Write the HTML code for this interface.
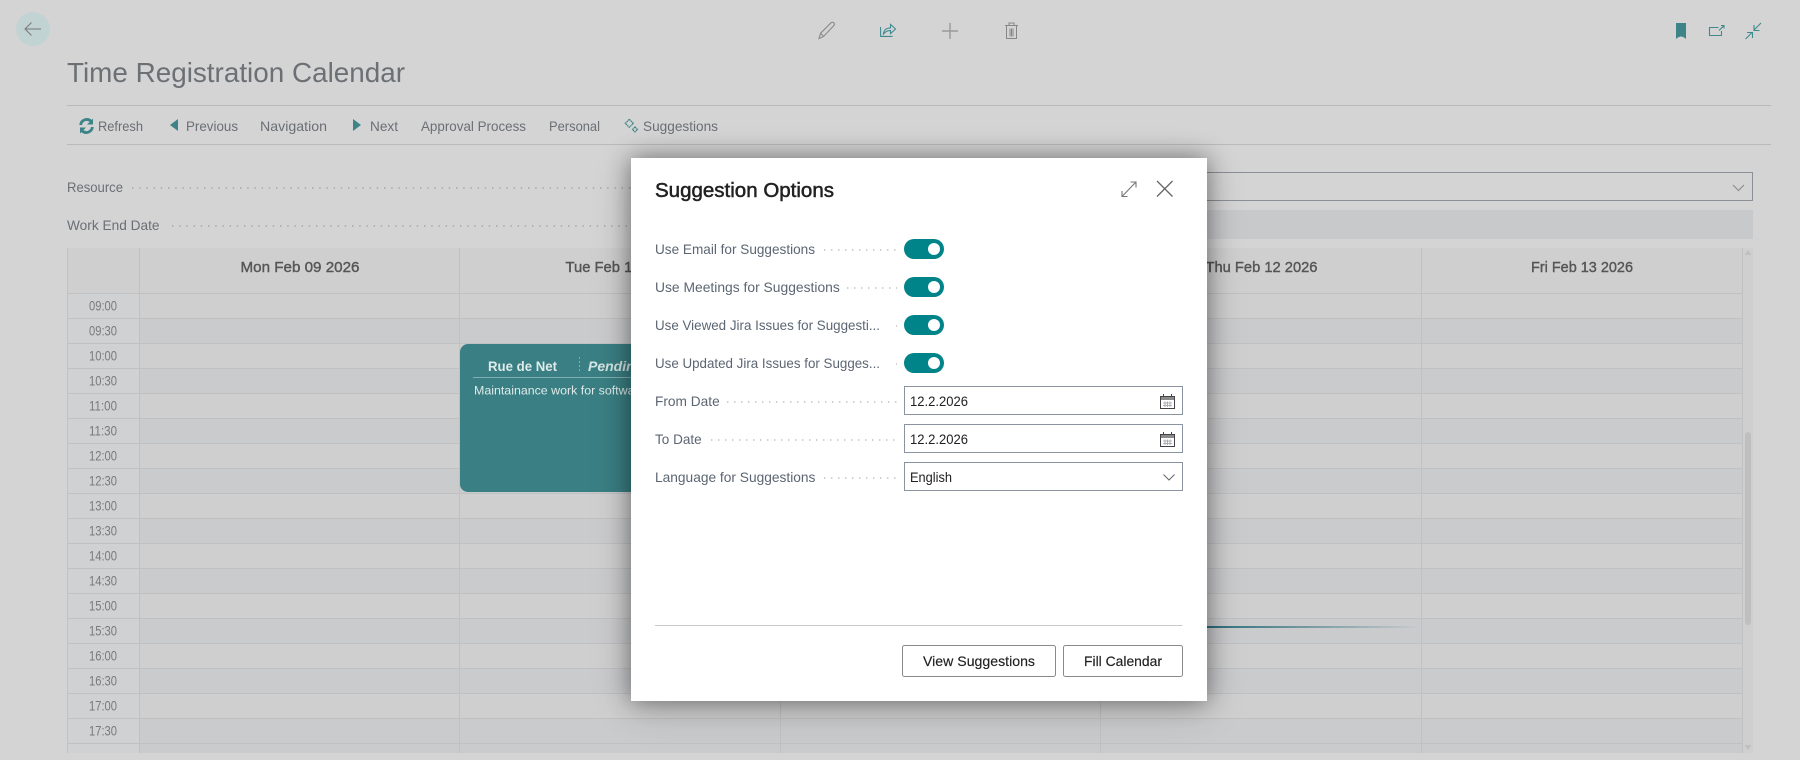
<!DOCTYPE html>
<html lang="en"><head><meta charset="utf-8"><title>Time Registration Calendar</title>
<style>
html,body{margin:0;padding:0;width:1800px;height:760px;overflow:hidden;background:#d4d4d4}
svg{position:absolute;left:0;top:0;display:block}
text{font-family:"Liberation Sans",sans-serif;font-size:14px;white-space:pre}
.tb text,.tb{fill:#6b6f75}
.lab{fill:#5c6673}
.hd{fill:#565656;stroke:#565656;stroke-width:.4;font-size:15px}
.tm{fill:#7a7a7a;font-size:12px;text-anchor:start}
.gr{stroke:#c0c1c3;stroke-width:1;fill:none}
#modal{position:absolute;left:631px;top:158px;width:576px;height:543px;background:#fff;box-shadow:0 0 22px rgba(0,0,0,.42),0 8px 40px rgba(0,0,0,.16)}
</style></head><body>
<svg width="1800" height="760" viewBox="0 0 1800 760" xmlns="http://www.w3.org/2000/svg">
<!-- back -->
<ellipse cx="33" cy="29" rx="17" ry="17" fill="#c2d3d4"/>
<path d="M41 29H25.5M31.5 22.5L25 29l6.5 6.5" fill="none" stroke="#777" stroke-width="1"/>
<!-- top icons -->
<path d="M819 38.5l1.6-5.3L831 22.8c.8-.8 2-.8 2.8 0s.8 2 0 2.8L823.4 36.6zM820.6 33.2l3 3.2" fill="none" stroke="#8a8a8a" stroke-width="1.1"/>
<path d="M880.6 27v9.4h12" fill="none" stroke="#3f8a90" stroke-width="1.1"/>
<path d="M883.5 34c.3-3.9 2.6-6 7-6v-3.6l5 4.6-5 4.6v-3.1c-2.8 0-5 .9-7 3.5z" fill="none" stroke="#3f8a90" stroke-width="1.1"/>
<path d="M942 31h16M950 23v16" stroke="#9a9a9a" stroke-width="1.4" fill="none"/>
<path d="M1005 25.5h13M1009 25v-2h5v2M1006.5 26v12.5h10V26M1010 28.5v8M1011.5 28.5v8M1013 28.5v8" fill="none" stroke="#868686" stroke-width="1"/>
<path d="M1676 23h10v16l-2-1.6-3-1-3 1-2 1.6z" fill="#3c8488"/>
<path d="M1721.5 31v4.5h-12v-8h9M1719 30.5l4.7-4.7M1721 25.5h3v3" fill="none" stroke="#3f8a8e" stroke-width="1.1"/>
<path d="M1761 23l-7 7M1754 25v5.5h5.5M1745.5 39l6.5-6.5M1747 32.5h5.5V38" fill="none" stroke="#3f8a8e" stroke-width="1.1"/>
<!-- title -->
<text x="67" y="82" style="font-size:28px" fill="#6c7075" textLength="338" lengthAdjust="spacingAndGlyphs">Time Registration Calendar</text>
<!-- toolbar -->
<rect x="67" y="105" width="1704" height="1" fill="#bababa"/>
<rect x="67" y="144" width="1704" height="1" fill="#bababa"/>
<g class="tb">
<text x="98" y="131" textLength="45" lengthAdjust="spacingAndGlyphs">Refresh</text>
<text x="186" y="131" textLength="52" lengthAdjust="spacingAndGlyphs">Previous</text>
<text x="260" y="131" textLength="67" lengthAdjust="spacingAndGlyphs">Navigation</text>
<text x="370" y="131" textLength="28" lengthAdjust="spacingAndGlyphs">Next</text>
<text x="421" y="131" textLength="105" lengthAdjust="spacingAndGlyphs">Approval Process</text>
<text x="549" y="131" textLength="51" lengthAdjust="spacingAndGlyphs">Personal</text>
<text x="643" y="131" textLength="75" lengthAdjust="spacingAndGlyphs">Suggestions</text>
</g>
<path d="M80.6 125a6.2 6.2 0 0 1 10.6-3.6M92.4 127a6.2 6.2 0 0 1-10.6 3.6" fill="none" stroke="#3c8488" stroke-width="2.8"/>
<path d="M93 118.5v6h-6zM80 133.5v-6h6z" fill="#3c8488"/>
<path d="M178 119v12l-8-6zM353 119v12l8-6z" fill="#3c8488"/>
<path d="M629.3 119.3l4 4-4 4-4-4zM635 127l2.5 2.5-2.5 2.5-2.5-2.5z" fill="none" stroke="#3c8488" stroke-width="1.2" stroke-dasharray="1.6 .5"/>
<!-- fields -->
<text x="67" y="192" class="tb" fill="#6f747a" textLength="56" lengthAdjust="spacingAndGlyphs">Resource</text>
<text x="67" y="230" class="tb" fill="#6f747a" textLength="92.5" lengthAdjust="spacingAndGlyphs">Work End Date</text>
<path d="M132 188H640M172 226H640" stroke="#9c9c9c" stroke-width="1.2" stroke-dasharray="1.4 5.8" fill="none"/>
<rect x="900.5" y="172.5" width="852" height="28" fill="none" stroke="#8b9097"/>
<rect x="900" y="210" width="853" height="29" fill="#c8c9cb"/>
<path d="M1733 185l5.5 5.5 5.5-5.5" fill="none" stroke="#888"/>
<!-- calendar -->
<rect x="67" y="248" width="1675" height="45" fill="#cfcfcf"/>
<rect x="139" y="293" width="1603" height="460" fill="#cfcfcf"/>
<rect x="67" y="293" width="72" height="460" fill="#d0d1d2"/>
<g fill="#cacbcd">
<rect x="140" y="318" width="1602" height="25"/><rect x="140" y="368" width="1602" height="25"/>
<rect x="140" y="418" width="1602" height="25"/><rect x="140" y="468" width="1602" height="25"/>
<rect x="140" y="518" width="1602" height="25"/><rect x="140" y="568" width="1602" height="25"/>
<rect x="140" y="618" width="1602" height="25"/><rect x="140" y="668" width="1602" height="25"/>
<rect x="140" y="718" width="1602" height="25"/><rect x="140" y="743" width="1602" height="10"/>
</g>
<path class="gr" d="M67 293.5H1742M67 318.5H1742M67 343.5H1742M67 368.5H1742M67 393.5H1742M67 418.5H1742M67 443.5H1742M67 468.5H1742M67 493.5H1742M67 518.5H1742M67 543.5H1742M67 568.5H1742M67 593.5H1742M67 618.5H1742M67 643.5H1742M67 668.5H1742M67 693.5H1742M67 718.5H1742M67 743.5H1742"/>
<path class="gr" d="M67.5 248V753M139.5 248V753M459.5 248V753M780.5 248V753M1100.5 248V753M1421.5 248V753M1742.5 248V753"/>
<text class="hd" x="240.5" y="272" textLength="119" lengthAdjust="spacingAndGlyphs">Mon Feb 09 2026</text>
<text class="hd" x="565.5" y="272" textLength="112" lengthAdjust="spacingAndGlyphs">Tue Feb 10 2026</text>
<text class="hd" x="1205.5" y="272" textLength="112" lengthAdjust="spacingAndGlyphs">Thu Feb 12 2026</text>
<text class="hd" x="1531" y="272" textLength="102" lengthAdjust="spacingAndGlyphs">Fri Feb 13 2026</text>
<g class="tm" transform="translate(0 .6)">
<text x="89" y="310" textLength="28" lengthAdjust="spacingAndGlyphs">09:00</text>
<text x="89" y="335" textLength="28" lengthAdjust="spacingAndGlyphs">09:30</text>
<text x="89" y="360" textLength="28" lengthAdjust="spacingAndGlyphs">10:00</text>
<text x="89" y="385" textLength="28" lengthAdjust="spacingAndGlyphs">10:30</text>
<text x="89" y="410" textLength="28" lengthAdjust="spacingAndGlyphs">11:00</text>
<text x="89" y="435" textLength="28" lengthAdjust="spacingAndGlyphs">11:30</text>
<text x="89" y="460" textLength="28" lengthAdjust="spacingAndGlyphs">12:00</text>
<text x="89" y="485" textLength="28" lengthAdjust="spacingAndGlyphs">12:30</text>
<text x="89" y="510" textLength="28" lengthAdjust="spacingAndGlyphs">13:00</text>
<text x="89" y="535" textLength="28" lengthAdjust="spacingAndGlyphs">13:30</text>
<text x="89" y="560" textLength="28" lengthAdjust="spacingAndGlyphs">14:00</text>
<text x="89" y="585" textLength="28" lengthAdjust="spacingAndGlyphs">14:30</text>
<text x="89" y="610" textLength="28" lengthAdjust="spacingAndGlyphs">15:00</text>
<text x="89" y="635" textLength="28" lengthAdjust="spacingAndGlyphs">15:30</text>
<text x="89" y="660" textLength="28" lengthAdjust="spacingAndGlyphs">16:00</text>
<text x="89" y="685" textLength="28" lengthAdjust="spacingAndGlyphs">16:30</text>
<text x="89" y="710" textLength="28" lengthAdjust="spacingAndGlyphs">17:00</text>
<text x="89" y="735" textLength="28" lengthAdjust="spacingAndGlyphs">17:30</text>
</g>
<!-- event -->
<rect x="460" y="344" width="300" height="148" rx="8" fill="#3a7f83"/>
<text x="488" y="371" fill="#dfeaea" style="font-weight:700" textLength="69" lengthAdjust="spacingAndGlyphs">Rue de Net</text>
<path d="M579.5 357V373" stroke="#8fbcbe" stroke-width=".8" stroke-dasharray="2 2"/>
<text x="588" y="371" fill="#d5e4e4" style="font-weight:700;font-style:italic">Pending</text>
<rect x="473" y="377" width="280" height="1" fill="#7fb1b3"/>
<text x="474" y="394.5" fill="#dfeaea" style="font-size:12.4px">Maintainance work for software</text>
<!-- time line -->
<defs><linearGradient id="tl" x1="0" x2="1" y1="0" y2="0"><stop offset="0" stop-color="#1f6a78"/><stop offset=".35" stop-color="#2f6f7c"/><stop offset="1" stop-color="#2f6f7c" stop-opacity="0"/></linearGradient></defs>
<rect x="1100" y="626" width="320" height="2" fill="url(#tl)"/>
<!-- scrollbar -->
<rect x="1743" y="248" width="10" height="505" fill="#cfcfd0"/>
<rect x="1745" y="432" width="6" height="193" rx="3" fill="#bfbfbf"/>
<path d="M1748 250l3.5 5h-7zM1748 750l3.5-5h-7z" fill="#bfbfc0"/>
</svg>
<div id="modal"></div>
<svg width="1800" height="760" viewBox="0 0 1800 760" xmlns="http://www.w3.org/2000/svg">
<text x="655" y="197" fill="#212121" stroke="#212121" stroke-width=".5" style="font-size:20px" textLength="179" lengthAdjust="spacingAndGlyphs">Suggestion Options</text>
<path d="M1122 196.5L1136 182M1130.5 182h5.5v5.5M1122 191v5.5h5.5" fill="none" stroke="#777" stroke-width="1.1"/>
<path d="M1157 181L1172.5 196.5M1172.5 181L1157 196.5" fill="none" stroke="#666" stroke-width="1.3"/>
<g class="lab">
<text x="655" y="254" textLength="160" lengthAdjust="spacingAndGlyphs">Use Email for Suggestions</text>
<text x="655" y="292" textLength="184.8" lengthAdjust="spacingAndGlyphs">Use Meetings for Suggestions</text>
<text x="655" y="330" textLength="225" lengthAdjust="spacingAndGlyphs">Use Viewed Jira Issues for Suggesti...</text>
<text x="655" y="368" textLength="225" lengthAdjust="spacingAndGlyphs">Use Updated Jira Issues for Sugges...</text>
<text x="655" y="406" textLength="64.7" lengthAdjust="spacingAndGlyphs">From Date</text>
<text x="655" y="444" textLength="46.7" lengthAdjust="spacingAndGlyphs">To Date</text>
<text x="655" y="482" textLength="160.4" lengthAdjust="spacingAndGlyphs">Language for Suggestions</text>
</g>
<path d="M824 250H897M847 288H897M896 326H897M896 364H897M727 402H897M711 440H897M824 478H897" stroke="#b4b4b4" stroke-width="1.2" stroke-dasharray="1.4 5.6" fill="none"/>
<g fill="#008489">
<rect x="904" y="239" width="40" height="20" rx="10"/><rect x="904" y="277" width="40" height="20" rx="10"/>
<rect x="904" y="315" width="40" height="20" rx="10"/><rect x="904" y="353" width="40" height="20" rx="10"/>
</g>
<g fill="#fff"><circle cx="934" cy="249" r="6"/><circle cx="934" cy="287" r="6"/><circle cx="934" cy="325" r="6"/><circle cx="934" cy="363" r="6"/></g>
<g fill="#fff" stroke="#8a93a0"><rect x="904.5" y="386.5" width="278" height="28"/><rect x="904.5" y="424.5" width="278" height="28"/><rect x="904.5" y="462.5" width="278" height="28"/></g>
<g fill="#212121">
<text x="910" y="406" textLength="58" lengthAdjust="spacingAndGlyphs">12.2.2026</text>
<text x="910" y="444" textLength="58" lengthAdjust="spacingAndGlyphs">12.2.2026</text>
<text x="910" y="482" textLength="42" lengthAdjust="spacingAndGlyphs">English</text>
</g>
<g fill="none" stroke="#444" stroke-width="1">
<path d="M1160.5 396.5h14v12h-14zM1163.5 394v3M1171.5 394v3"/>
<rect x="1161" y="397" width="13" height="3" fill="#8a8a8a" stroke="none"/>
<path d="M1163 403h9M1163 405.5h9M1165 401.5v5.5M1167.5 401.5v5.5M1170 401.5v5.5" stroke="#9aa0a8" stroke-width=".8"/>
<path d="M1160.5 434.5h14v12h-14zM1163.5 432v3M1171.5 432v3"/>
<rect x="1161" y="435" width="13" height="3" fill="#8a8a8a" stroke="none"/>
<path d="M1163 441h9M1163 443.5h9M1165 439.5v5.5M1167.5 439.5v5.5M1170 439.5v5.5" stroke="#9aa0a8" stroke-width=".8"/>
<path d="M1163.5 474.5l5.5 5.5 5.5-5.5" stroke="#666"/>
</g>
<rect x="655" y="625" width="527.5" height="1" fill="#c8c8c8"/>
<g fill="#fff" stroke="#8a8a8a"><rect x="902.5" y="645.5" width="153" height="31" rx="2"/><rect x="1063.5" y="645.5" width="119" height="31" rx="2"/></g>
<g fill="#212121" stroke="#212121" stroke-width=".15">
<text x="923" y="666" textLength="112" lengthAdjust="spacingAndGlyphs">View Suggestions</text>
<text x="1084" y="666" textLength="78" lengthAdjust="spacingAndGlyphs">Fill Calendar</text>
</g>
</svg>
</body></html>
